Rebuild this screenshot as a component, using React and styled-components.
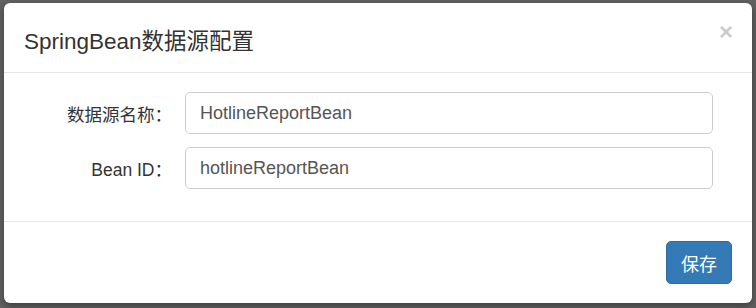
import styled, { createGlobalStyle } from "styled-components";

const GlobalStyle = createGlobalStyle`
  html, body {
    margin: 0;
    padding: 0;
    background: #626262;
  }
  body {
    font-family: "Liberation Sans", "Noto Sans CJK SC", sans-serif;
    color: #333;
  }
`;

const Backdrop = styled.div`
  width: 756px;
  height: 308px;
  background: #626262;
  padding: 3px 0 0 4px;
  box-sizing: border-box;
  overflow: hidden;
`;

const Modal = styled.div`
  width: 748px;
  height: 300px;
  background: #fff;
  border-radius: 6px;
  box-shadow: 0 3px 9px rgba(0, 0, 0, 0.4);
  display: flex;
  flex-direction: column;
  overflow: hidden;
`;

const Header = styled.div`
  height: 69px;
  border-bottom: 1px solid #e5e5e5;
  display: flex;
  align-items: center;
  justify-content: space-between;
  padding: 0 20px;
`;

const Title = styled.h4`
  margin: 0;
  font-size: 22.5px;
  font-weight: normal;
  color: #333;
  padding-top: 2px;
`;

const Close = styled.button`
  border: none;
  background: none;
  padding: 0;
  margin-top: -12px;
  margin-right: -1px;
  font-family: "Liberation Sans", sans-serif;
  font-size: 24px;
  font-weight: bold;
  line-height: 1;
  color: #000;
  opacity: 0.2;
  cursor: pointer;
`;

const Body = styled.div`
  padding: 19px 20px 32px;
  display: flex;
  flex-direction: column;
  gap: 13px;
  border-bottom: 1px solid #e5e5e5;
`;

const Row = styled.div`
  display: grid;
  grid-template-columns: 148px 528px;
  column-gap: 13px;
  align-items: center;
`;

const Label = styled.label`
  text-align: right;
  font-size: 17.5px;
  color: #333;
`;

const Input = styled.input`
  box-sizing: border-box;
  height: 42px;
  width: 100%;
  padding: 0 14px;
  border: 1px solid #ccc;
  border-radius: 5px;
  font-family: "Liberation Sans", "Noto Sans CJK SC", sans-serif;
  font-size: 18px;
  color: #555;
  outline: none;
`;

const Footer = styled.div`
  flex: 1;
  display: flex;
  justify-content: flex-end;
  align-items: flex-start;
  padding: 19px 20px 0;
`;

const Button = styled.button`
  width: 66px;
  height: 43px;
  background: #337ab7;
  border: 1px solid #2e6da4;
  border-radius: 5px;
  color: #fff;
  font-family: "Liberation Sans", "Noto Sans CJK SC", sans-serif;
  font-size: 18px;
  cursor: pointer;
`;

const fields = [
  { label: "数据源名称：", value: "HotlineReportBean" },
  { label: "Bean ID：", value: "hotlineReportBean" },
];

export default function App() {
  return (
    <>
      <GlobalStyle />
      <Backdrop>
        <Modal>
          <Header>
            <Title>SpringBean数据源配置</Title>
            <Close aria-label="Close">×</Close>
          </Header>
          <Body>
            {fields.map((f) => (
              <Row key={f.label}>
                <Label>{f.label}</Label>
                <Input defaultValue={f.value} />
              </Row>
            ))}
          </Body>
          <Footer>
            <Button>保存</Button>
          </Footer>
        </Modal>
      </Backdrop>
    </>
  );
}
